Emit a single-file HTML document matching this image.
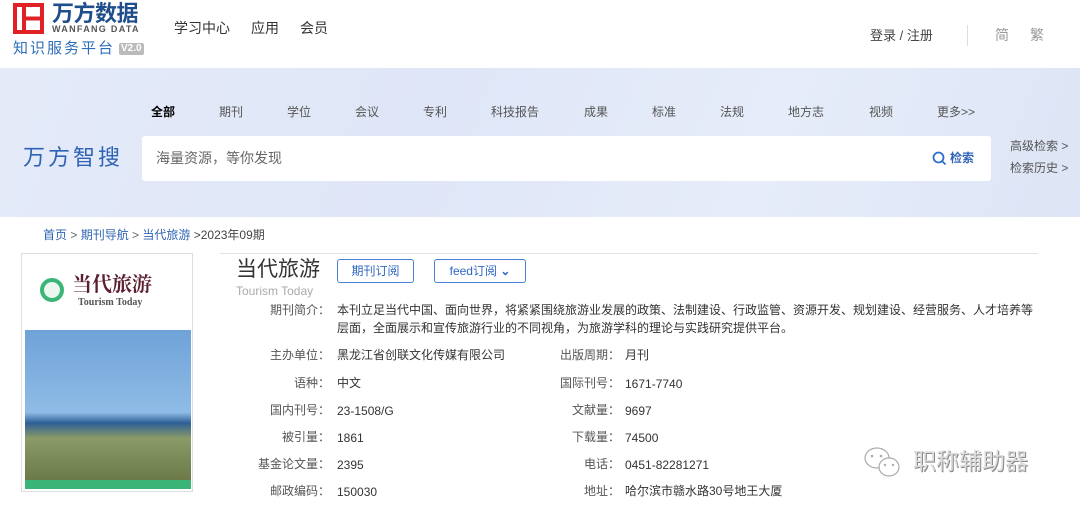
<!DOCTYPE html>
<html><head><meta charset="utf-8"><style>
*{margin:0;padding:0;box-sizing:border-box}
body{width:1080px;height:510px;overflow:hidden;background:#fff;font-family:"Liberation Sans","Noto Sans CJK SC",sans-serif;position:relative;color:#333}
.a{position:absolute;white-space:nowrap;line-height:1}
.band{position:absolute;left:0;top:68px;width:1080px;height:149px;background:linear-gradient(110deg,#e4eaf8 0%,#dfe6f7 40%,#e6ecf9 70%,#dde5f6 100%)}
.tab{font-size:12px;color:#555;top:106px}
.lab{font-size:12px;color:#555;text-align:right;width:120px}
.val{font-size:12px;color:#333}
.btn{position:absolute;border:1px solid #4a80d8;border-radius:3px;color:#2f66c2;font-size:12px;text-align:center;line-height:22px;height:24px}
</style></head><body>
<!-- logo -->
<svg class="a" style="left:13px;top:3px" width="31" height="31" viewBox="0 0 31 31"><rect x="2" y="2" width="27" height="27" fill="none" stroke="#e02227" stroke-width="4"/><path d="M11 2v27M11 15.5h17" stroke="#e02227" stroke-width="4"/></svg>
<div class="a" style="left:52px;top:3px;font-size:22px;font-weight:bold;color:#1f4e8c;letter-spacing:-0.5px">万方数据</div>
<div class="a" style="left:52px;top:25px;font-size:9px;font-weight:bold;color:#555;letter-spacing:1.3px">WANFANG DATA</div>
<div class="a" style="left:13px;top:41px;font-size:15px;color:#2f6fb9;letter-spacing:2px">知识服务平台</div>
<div class="a" style="left:119px;top:43px;font-size:10px;color:#fff;background:#bbb;border-radius:2px;padding:1px 2px;font-weight:bold">V2.0</div>
<div class="a" style="left:174px;top:21px;font-size:14px;color:#333">学习中心</div>
<div class="a" style="left:251px;top:21px;font-size:14px;color:#333">应用</div>
<div class="a" style="left:300px;top:21px;font-size:14px;color:#333">会员</div>
<div class="a" style="left:870px;top:29px;font-size:13px;color:#444">登录 / 注册</div>
<div class="a" style="left:967px;top:25px;width:1px;height:21px;background:#ddd"></div>
<div class="a" style="left:995px;top:28px;font-size:14px;color:#999">简</div>
<div class="a" style="left:1030px;top:28px;font-size:14px;color:#999">繁</div>
<!-- band -->
<div class="band"></div>
<div class="a tab" style="left:151px;color:#000;font-weight:bold">全部</div>
<div class="a tab" style="left:219px">期刊</div>
<div class="a tab" style="left:287px">学位</div>
<div class="a tab" style="left:355px">会议</div>
<div class="a tab" style="left:423px">专利</div>
<div class="a tab" style="left:491px">科技报告</div>
<div class="a tab" style="left:584px">成果</div>
<div class="a tab" style="left:652px">标准</div>
<div class="a tab" style="left:720px">法规</div>
<div class="a tab" style="left:788px">地方志</div>
<div class="a tab" style="left:869px">视频</div>
<div class="a tab" style="left:937px">更多&gt;&gt;</div>
<div class="a" style="left:23px;top:147px;font-size:22px;color:#2f64b4;letter-spacing:3px">万方智搜</div>
<div class="a" style="left:142px;top:136px;width:849px;height:45px;background:#fff;border-radius:3px"></div>
<div class="a" style="left:156px;top:151px;font-size:14px;color:#666">海量资源，等你发现</div>
<svg class="a" style="left:932px;top:151px" width="15" height="15" viewBox="0 0 15 15"><circle cx="6.5" cy="6.5" r="5" fill="none" stroke="#2f6fc9" stroke-width="1.8"/><path d="M10 10l3.5 3.5" stroke="#2f6fc9" stroke-width="1.8"/></svg>
<div class="a" style="left:950px;top:152px;font-size:12px;color:#2f64b4;font-weight:bold">检索</div>
<div class="a" style="left:1010px;top:140px;font-size:12px;color:#555">高级检索 &gt;</div>
<div class="a" style="left:1010px;top:162px;font-size:12px;color:#555">检索历史 &gt;</div>
<!-- breadcrumb -->
<div class="a" style="left:43px;top:229px;font-size:12px;color:#2f64b4">首页 <span style="color:#666">&gt;</span> 期刊导航 <span style="color:#666">&gt;</span> 当代旅游 <span style="color:#444">&gt;2023年09期</span></div>
<div class="a" style="left:220px;top:253px;width:818px;height:1px;background:#e2e2e2"></div>
<!-- cover -->
<div class="a" style="left:21px;top:253px;width:172px;height:239px;border:1px solid #ddd;background:#fff"></div>
<div class="a" style="left:25px;top:330px;width:166px;height:150px;background:linear-gradient(180deg,#6fa2d8 0%,#8fbce6 55%,#2d5f96 62%,#8a9a68 72%,#6b7a48 100%)"></div>
<div class="a" style="left:25px;top:480px;width:166px;height:9px;background:#3bb577"></div>
<div class="a" style="left:40px;top:278px;width:24px;height:24px;border-radius:50%;border:4px solid #3bb577;background:#eaf6ee"></div>
<div class="a" style="left:72px;top:273px;font-size:20px;font-weight:bold;color:#5a2030;font-family:'Noto Serif CJK SC',serif">当代旅游</div>
<div class="a" style="left:78px;top:298px;font-size:10px;font-weight:bold;color:#555;font-family:'Liberation Serif',serif">Tourism Today</div>
<!-- title -->
<div class="a" style="left:236px;top:259px;font-size:21px;color:#333">当代旅游</div>
<div class="a" style="left:236px;top:285px;font-size:12px;color:#aaa">Tourism Today</div>
<div class="btn" style="left:337px;top:259px;width:77px">期刊订阅</div>
<div class="btn" style="left:434px;top:259px;width:92px">feed订阅 <b>⌄</b></div>
<!-- info -->
<div class="a lab" style="left:210px;top:304px">期刊简介：</div>
<div class="a val" style="left:337px;top:304px">本刊立足当代中国、面向世界，将紧紧围绕旅游业发展的政策、法制建设、行政监管、资源开发、规划建设、经营服务、人才培养等</div>
<div class="a val" style="left:337px;top:322px">层面，全面展示和宣传旅游行业的不同视角，为旅游学科的理论与实践研究提供平台。</div>
<div class="a lab" style="left:210px;top:349px">主办单位：</div><div class="a val" style="left:337px;top:349px">黑龙江省创联文化传媒有限公司</div>
<div class="a lab" style="left:210px;top:377px">语种：</div><div class="a val" style="left:337px;top:377px">中文</div>
<div class="a lab" style="left:210px;top:404px">国内刊号：</div><div class="a val" style="left:337px;top:405px">23-1508/G</div>
<div class="a lab" style="left:210px;top:431px">被引量：</div><div class="a val" style="left:337px;top:432px">1861</div>
<div class="a lab" style="left:210px;top:458px">基金论文量：</div><div class="a val" style="left:337px;top:459px">2395</div>
<div class="a lab" style="left:210px;top:485px">邮政编码：</div><div class="a val" style="left:337px;top:486px">150030</div>
<div class="a lab" style="left:500px;top:349px">出版周期：</div><div class="a val" style="left:625px;top:349px">月刊</div>
<div class="a lab" style="left:500px;top:377px">国际刊号：</div><div class="a val" style="left:625px;top:378px">1671-7740</div>
<div class="a lab" style="left:500px;top:404px">文献量：</div><div class="a val" style="left:625px;top:405px">9697</div>
<div class="a lab" style="left:500px;top:431px">下载量：</div><div class="a val" style="left:625px;top:432px">74500</div>
<div class="a lab" style="left:500px;top:458px">电话：</div><div class="a val" style="left:625px;top:459px">0451-82281271</div>
<div class="a lab" style="left:500px;top:485px">地址：</div><div class="a val" style="left:625px;top:485px">哈尔滨市赣水路30号地王大厦</div>
<!-- watermark -->
<svg class="a" style="left:862px;top:446px" width="46" height="36" viewBox="0 0 46 36"><ellipse cx="15" cy="12" rx="12" ry="10" fill="#fff" stroke="#aaa" stroke-width="1.2"/><ellipse cx="27" cy="21" rx="10" ry="9" fill="#fff" stroke="#aaa" stroke-width="1.2"/><circle cx="10" cy="10" r="1.3" fill="#aaa"/><circle cx="19" cy="10" r="1.3" fill="#aaa"/><circle cx="23" cy="19" r="1.2" fill="#aaa"/><circle cx="31" cy="19" r="1.2" fill="#aaa"/></svg>
<div class="a" style="left:913px;top:450px;font-size:23px;color:#ddd;text-shadow:1px 1px 0 #888,-1px -1px 0 #fff">职称辅助器</div>
</body></html>
